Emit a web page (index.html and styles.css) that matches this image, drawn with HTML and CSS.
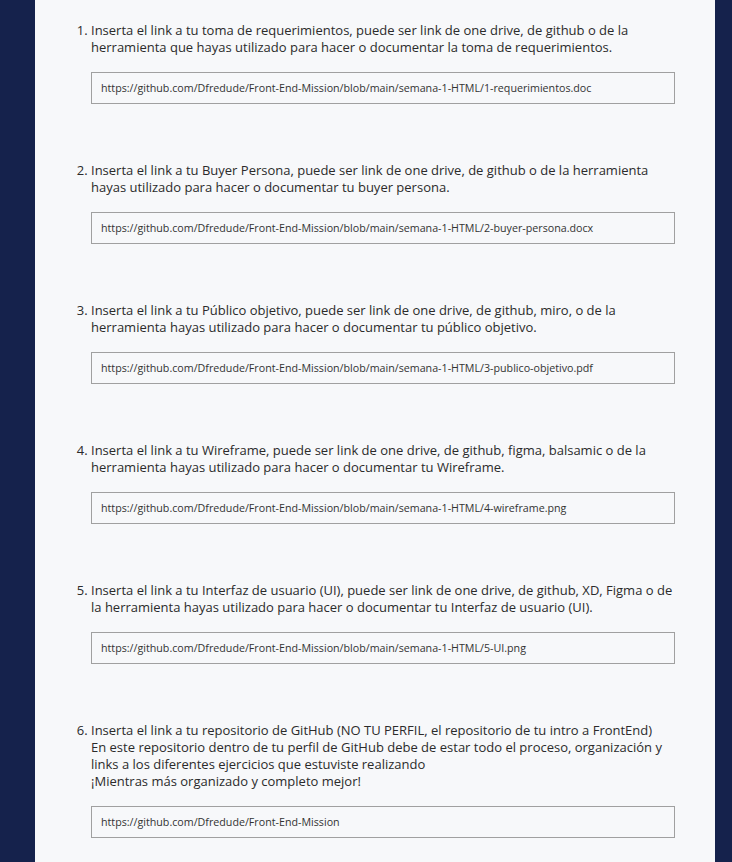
FILE: index.html
```html
<!DOCTYPE html>
<html lang="es">
<head>
<meta charset="utf-8">
<link rel="stylesheet" href="styles.css">
</head>
<body>
<main class="panel">
  <ol class="tasks">
    <li class="task">
      <p class="task-text">Inserta el link a tu toma de requerimientos, puede ser link de one drive, de github o de la herramienta que hayas utilizado para hacer o documentar la toma de requerimientos.</p>
      <input class="task-input" type="text" value="https://github.com/Dfredude/Front-End-Mission/blob/main/semana-1-HTML/1-requerimientos.doc">
    </li>
    <li class="task">
      <p class="task-text">Inserta el link a tu Buyer Persona, puede ser link de one drive, de github o de la herramienta hayas utilizado para hacer o documentar tu buyer persona.</p>
      <input class="task-input" type="text" value="https://github.com/Dfredude/Front-End-Mission/blob/main/semana-1-HTML/2-buyer-persona.docx">
    </li>
    <li class="task">
      <p class="task-text">Inserta el link a tu Público objetivo, puede ser link de one drive, de github, miro, o de la herramienta hayas utilizado para hacer o documentar tu público objetivo.</p>
      <input class="task-input" type="text" value="https://github.com/Dfredude/Front-End-Mission/blob/main/semana-1-HTML/3-publico-objetivo.pdf">
    </li>
    <li class="task">
      <p class="task-text">Inserta el link a tu Wireframe, puede ser link de one drive, de github, figma, balsamic o de la herramienta hayas utilizado para hacer o documentar tu Wireframe.</p>
      <input class="task-input" type="text" value="https://github.com/Dfredude/Front-End-Mission/blob/main/semana-1-HTML/4-wireframe.png">
    </li>
    <li class="task">
      <p class="task-text">Inserta el link a tu Interfaz de usuario (UI), puede ser link de one drive, de github, XD, Figma o de la herramienta hayas utilizado para hacer o documentar tu Interfaz de usuario (UI).</p>
      <input class="task-input" type="text" value="https://github.com/Dfredude/Front-End-Mission/blob/main/semana-1-HTML/5-UI.png">
    </li>
    <li class="task">
      <p class="task-text">Inserta el link a tu repositorio de GitHub (NO TU PERFIL, el repositorio de tu intro a FrontEnd)<br>En este repositorio dentro de tu perfil de GitHub debe de estar todo el proceso, organización y links a los diferentes ejercicios que estuviste realizando<br>¡Mientras más organizado y completo mejor!</p>
      <input class="task-input" type="text" value="https://github.com/Dfredude/Front-End-Mission">
    </li>
  </ol>
</main>
</body>
</html>
```

FILE: styles.css
```css
html, body {
  margin: 0;
  padding: 0;
}
body {
  background: #15224c;
  font-family: "Open Sans", "Noto Sans", sans-serif;
  color: #2b2b2b;
}
.panel {
  margin: 0 17px 0 35px;
  background: #f7f8fa;
  height: 862px;
  overflow: hidden;
  padding: 22px 40px 0 0;
  box-sizing: border-box;
}
.tasks {
  margin: 0;
  padding: 0 0 0 56px;
}
.task {
  font-size: 13px;
  line-height: 17px;
  margin-bottom: 58px;
}
.task:last-child {
  margin-bottom: 0;
}
.task-text {
  margin: 0 0 16px;
}
.task-input {
  display: block;
  box-sizing: border-box;
  width: 584px;
  height: 32px;
  margin: 0;
  padding: 0 9px;
  border: 1px solid #a0a0a0;
  border-radius: 0;
  background: #f7f8fa;
  font-family: "Open Sans", "Noto Sans", sans-serif;
  font-size: 10.7px;
  color: #333;
  outline: none;
}
```
